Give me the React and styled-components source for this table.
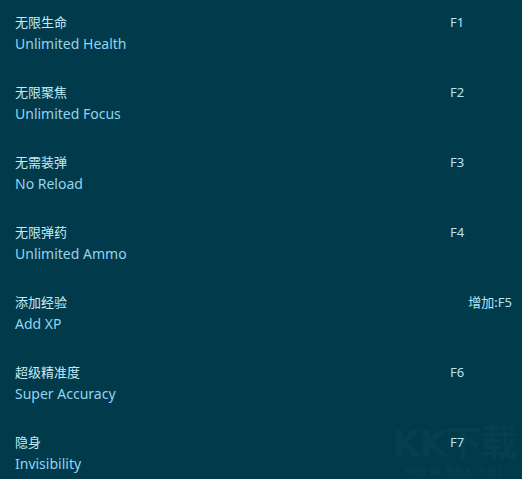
import React from 'react';
import styled, { createGlobalStyle } from 'styled-components';

const GlobalStyle = createGlobalStyle`
  html, body {
    margin: 0;
    padding: 0;
    background: #013a4b;
  }
  body {
    font-family: "Noto Sans", "Noto Sans CJK SC", sans-serif;
  }
`;

const Page = styled.div`
  position: relative;
  width: 522px;
  height: 479px;
  overflow: hidden;
  background: #013a4b;
  padding: 11px 10px 0 15px;
  box-sizing: border-box;
`;

const Row = styled.div`
  position: relative;
  z-index: 1;
  display: flex;
  height: 70px;
`;

const Names = styled.div`
  flex: 1;
  display: flex;
  flex-direction: column;
`;

const ChineseName = styled.div`
  font-family: "Noto Sans CJK SC", sans-serif;
  font-size: 13px;
  line-height: 22px;
  color: #c4ecf8;
`;

const EnglishName = styled.div`
  font-size: 14px;
  line-height: 22px;
  color: #93d4ee;
`;

const Key = styled.div`
  width: ${(p) => (p.$wide ? 'auto' : '62px')};
  font-family: "Noto Sans", "Noto Sans CJK SC", sans-serif;
  font-size: 13px;
  line-height: 22px;
  color: #b4e4f6;
`;

const Watermark = styled.div`
  position: absolute;
  z-index: 0;
  right: 6px;
  bottom: 1px;
  display: flex;
  flex-direction: column;
  align-items: center;
  color: #06404f;
  pointer-events: none;
`;

const MarkLogo = styled.div`
  font-family: "DejaVu Sans", "Noto Sans CJK SC", sans-serif;
  font-weight: bold;
  font-size: 36px;
  line-height: 40px;
  letter-spacing: -1px;
`;

const MarkUrl = styled.div`
  font-family: "DejaVu Sans", sans-serif;
  font-weight: bold;
  font-size: 12px;
  line-height: 14px;
  letter-spacing: 1px;
`;

const cheats = [
  { cn: '无限生命', en: 'Unlimited Health', key: 'F1' },
  { cn: '无限聚焦', en: 'Unlimited Focus', key: 'F2' },
  { cn: '无需装弹', en: 'No Reload', key: 'F3' },
  { cn: '无限弹药', en: 'Unlimited Ammo', key: 'F4' },
  { cn: '添加经验', en: 'Add XP', key: '增加:F5', wide: true },
  { cn: '超级精准度', en: 'Super Accuracy', key: 'F6' },
  { cn: '隐身', en: 'Invisibility', key: 'F7' },
];

export default function App() {
  return (
    <>
      <GlobalStyle />
      <Page>
        <Watermark>
          <MarkLogo>KK下载</MarkLogo>
          <MarkUrl>www.kkx.net</MarkUrl>
        </Watermark>
        {cheats.map((c) => (
          <Row key={c.en}>
            <Names>
              <ChineseName>{c.cn}</ChineseName>
              <EnglishName>{c.en}</EnglishName>
            </Names>
            <Key $wide={c.wide}>{c.key}</Key>
          </Row>
        ))}
      </Page>
    </>
  );
}
